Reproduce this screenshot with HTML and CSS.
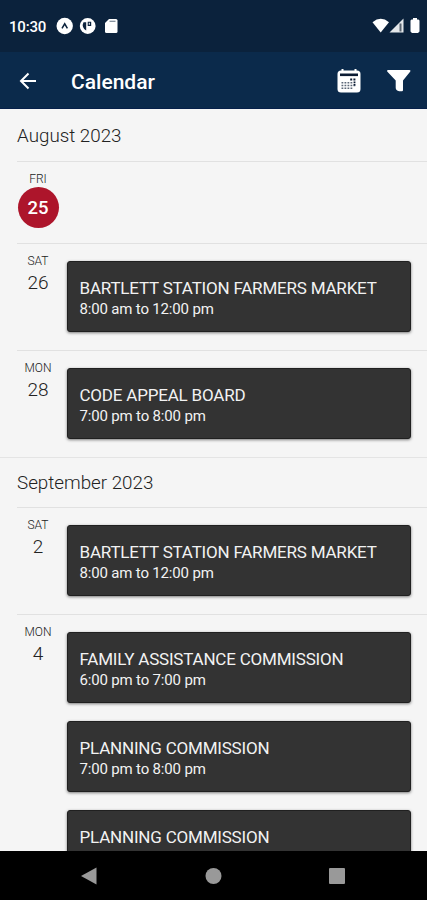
FILE: index.html
```html
<!DOCTYPE html>
<html lang="en">
<head>
  <meta charset="UTF-8" />
  <meta name="viewport" content="width=device-width, initial-scale=1.0"/>
  <title>Calendar</title>
  <link rel="stylesheet" href="styles.css">
</head>
<body>
  <div class="status-bar">
    <span class="clock">10:30</span>
    <svg class="status-left" width="64" height="18" viewBox="0 0 64 18">
      <circle cx="8.700" cy="9" r="8.200" fill="#fff"/>
      <path d="M6 11.300 L8.700 6.800 L11.400 11.300" fill="none" stroke="#0b223c" stroke-width="1.500"/>
      <circle cx="31.700" cy="9" r="7.900" fill="#fff"/>
      <path d="M27.500 5.200h2.700v8.300a6 6 0 0 1-2.700-8.300z M31.700 4.700h3.500v4.300h-3.500z" fill="#0b223c"/>
      <path d="M32.800 5.800h1v2h-1z" fill="#fff"/>
      <path d="M53 2h7a1.500 1.500 0 0 1 1.500 1.500v11a1.500 1.500 0 0 1-1.500 1.500h-9.500a1.500 1.500 0 0 1-1.500-1.500V6z" fill="#fff"/>
      <path d="M53.500 4.300h6" stroke="#7b8896" stroke-width="1.200"/>
    </svg>
    <svg class="status-right" width="50" height="18" viewBox="0 0 50 18">
      <path d="M.5 5.200Q8.700-1.500 17 5.200L8.700 15.500z" fill="#fff"/>
      <path d="M31.500 1.500v14H17.500z" fill="#e4e7ea"/>
      <path d="M28.500 6.500v8" stroke="#59636f" stroke-width="2"/>
      <path d="M39.500 2.500H41V1h4v1.500h1.500l1 1V14.500l-1.500 1.500h-6l-1.500-1.500V3.500z" fill="#fff"/>
    </svg>
  </div>

  <header class="app-bar">
    <svg class="back" width="20" height="20" viewBox="0 0 20 20">
      <path d="M18 10H3M10.500 2.500L3 10L10.500 17.500" fill="none" stroke="#fff" stroke-width="2"/>
    </svg>
    <h1>Calendar</h1>
    <svg class="icon-calendar" width="24" height="24" viewBox="0 0 24 24">
      <rect x=".5" y="1.500" width="23" height="22" rx="3.500" fill="#fff"/>
      <path d="M3 5.800h18" stroke="#0b1b33" stroke-width="2.600"/>
      <path d="M5.500 0v3M18.500 0v3" stroke="#fff" stroke-width="2"/>
      <path d="M13.200 10.500h6" stroke="#0b1b33" stroke-width="2" stroke-dasharray="2 1.200"/>
      <path d="M4.500 13.800h12M4.500 16.500h14M4.500 19.200h11" stroke="#5d6878" stroke-width="1.500" stroke-dasharray="1.800 1.200"/>
      <path d="M17.500 12.500v4" stroke="#0b1b33" stroke-width="1.800" stroke-dasharray="1.700 .8"/>
    </svg>
    <svg class="icon-filter" width="26" height="24" viewBox="0 0 26 24">
      <path d="M2 1h21.500q1.500 0 .8 1.500L17 11.500v9.500q0 1.500-1.500 1.200h-2.300q-3.500-.7-3.500-3.500v-7.200L1.200 2.500Q.5 1 2 1z" fill="#fff"/>
    </svg>
  </header>

  <main class="agenda">
    <h2>August 2023</h2>
    <section class="day">
      <div class="date today"><span class="weekday">FRI</span><span class="number">25</span></div>
    </section>
    <section class="day">
      <div class="date"><span class="weekday">SAT</span><span class="number">26</span></div>
      <div class="events">
        <div class="event"><h3>BARTLETT STATION FARMERS MARKET</h3><p>8:00 am to 12:00 pm</p></div>
      </div>
    </section>
    <section class="day">
      <div class="date"><span class="weekday">MON</span><span class="number">28</span></div>
      <div class="events">
        <div class="event"><h3>CODE APPEAL BOARD</h3><p>7:00 pm to 8:00 pm</p></div>
      </div>
    </section>

    <h2 class="next-month">September 2023</h2>
    <section class="day">
      <div class="date"><span class="weekday">SAT</span><span class="number">2</span></div>
      <div class="events">
        <div class="event"><h3>BARTLETT STATION FARMERS MARKET</h3><p>8:00 am to 12:00 pm</p></div>
      </div>
    </section>
    <section class="day">
      <div class="date"><span class="weekday">MON</span><span class="number">4</span></div>
      <div class="events">
        <div class="event"><h3>FAMILY ASSISTANCE COMMISSION</h3><p>6:00 pm to 7:00 pm</p></div>
        <div class="event"><h3>PLANNING COMMISSION</h3><p>7:00 pm to 8:00 pm</p></div>
        <div class="event"><h3>PLANNING COMMISSION</h3></div>
      </div>
    </section>
  </main>

  <nav class="nav-bar">
    <svg width="18" height="20" viewBox="0 0 18 20"><path d="M1 10L16.500 1.500v17z" fill="#999"/></svg>
    <svg width="18" height="20" viewBox="0 0 18 20"><circle cx="9.500" cy="10" r="8" fill="#999"/></svg>
    <svg width="18" height="20" viewBox="0 0 18 20"><rect x="1" y="2" width="16" height="16" rx="1" fill="#999"/></svg>
  </nav>
</body>
</html>
```

FILE: styles.css
```css
* {
  box-sizing: border-box;
}

body {
  margin: 0;
  height: 900px;
  display: flex;
  flex-direction: column;
  overflow: hidden;
  font-family: Roboto, sans-serif;
  background: #f5f5f5;
  color: #222;
}

h1, h2, h3, p {
  margin: 0;
}

svg {
  display: block;
  flex: none;
}

.status-bar {
  display: flex;
  flex: none;
  align-items: center;
  height: 52px;
  padding: 0 5px 0 9px;
  background: #0b223c;
  color: #fff;
}

.clock {
  width: 47px;
  padding-top: 1px;
  font-size: 15px;
  font-weight: 500;
  letter-spacing: -0.2px;
}

.status-right {
  margin-left: auto;
}

.app-bar {
  display: flex;
  flex: none;
  align-items: center;
  height: 57px;
  padding: 1px 15px 0 18px;
  background: #0b2a4b;
  border-bottom: 1px solid #06204a;
  color: #fff;
}

.app-bar h1 {
  margin-left: 33px;
  padding-top: 2px;
  font-size: 21px;
  font-weight: 500;
}

.icon-calendar {
  margin-left: auto;
}

.icon-filter {
  margin-left: 25px;
}

.agenda {
  flex: 1;
  min-height: 0;
  overflow: hidden;
}

.agenda h2 {
  height: 52px;
  padding-left: 17px;
  font-size: 18.8px;
  font-weight: 300;
  line-height: 54px;
}

.agenda .next-month {
  height: 50px;
  border-top: 1px solid #e4e4e4;
  line-height: 51px;
}

.day {
  display: flex;
  min-height: 82px;
  margin-left: 17px;
  border-top: 1px solid #e1e1e1;
}

.date {
  display: flex;
  flex-direction: column;
  align-items: center;
  width: 42px;
  padding-top: 10px;
}

.weekday {
  font-size: 12px;
  font-weight: 300;
  line-height: 15px;
}

.number {
  font-size: 19px;
  font-weight: 300;
  line-height: 27px;
  text-align: center;
}

.today .number {
  width: 41px;
  height: 41px;
  border-radius: 50%;
  background: #ad152b;
  color: #fff;
  font-size: 18.5px;
  font-weight: 500;
  line-height: 42px;
}

.events {
  flex: 1;
  padding: 17px 16px 0 8px;
}

.event {
  height: 71px;
  margin-bottom: 18px;
  padding: 16px 11.5px;
  border: 1px solid #202020;
  border-radius: 3px;
  background: #333;
  box-shadow: 0 1px 3px rgba(0, 0, 0, 0.5);
  color: #f2f2f2;
}

.event h3 {
  font-size: 17px;
  font-weight: 400;
  line-height: 21px;
  letter-spacing: -0.2px;
}

.event p {
  font-size: 15px;
  line-height: 21px;
  letter-spacing: -0.17px;
}

.nav-bar {
  display: flex;
  flex: none;
  align-items: center;
  justify-content: space-between;
  height: 49px;
  padding: 0 81px 0 80px;
  background: #000;
}
```
